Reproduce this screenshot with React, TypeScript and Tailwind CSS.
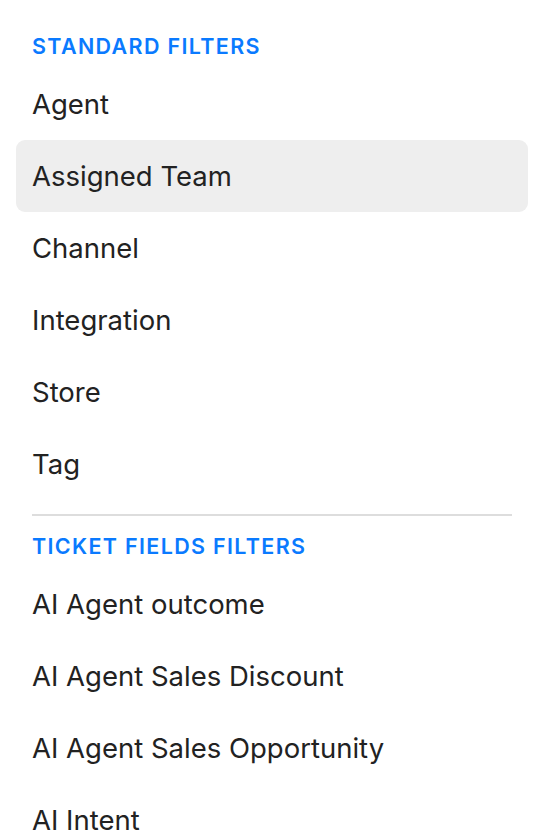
import React from 'react';

const standard = ['Agent', 'Assigned Team', 'Channel', 'Integration', 'Store', 'Tag'];
const ticketFields = ['AI Agent outcome', 'AI Agent Sales Discount', 'AI Agent Sales Opportunity', 'AI Intent'];

const Header: React.FC<{ label: string }> = ({ label }) => (
  <div className="px-8 h-8 flex items-center text-[21.5px] font-semibold tracking-[0.062em] text-[#0a7aff] uppercase mb-[6px]">
    {label}
  </div>
);

const Item: React.FC<{ label: string; active?: boolean }> = ({ label, active }) => (
  <div
    className={`mx-4 h-[72px] flex items-center px-4 rounded-[9px] text-[27.5px] text-[#222] ${
      active ? 'bg-[#eeeeee]' : ''
    }`}
  >
    <span className="translate-y-[1px]">{label}</span>
  </div>
);

export default function App() {
  return (
    <div className="w-[544px] h-[840px] overflow-hidden bg-white pt-[30px] font-['Inter',sans-serif]">
      <Header label="Standard Filters" />
      {standard.map((s) => (
        <Item key={s} label={s} active={s === 'Assigned Team'} />
      ))}
      <div className="mx-8 mt-[14px] mb-[14px] h-[2px] bg-[#dddddd]" />
      <Header label="Ticket Fields Filters" />
      {ticketFields.map((s) => (
        <Item key={s} label={s} />
      ))}
    </div>
  );
}
